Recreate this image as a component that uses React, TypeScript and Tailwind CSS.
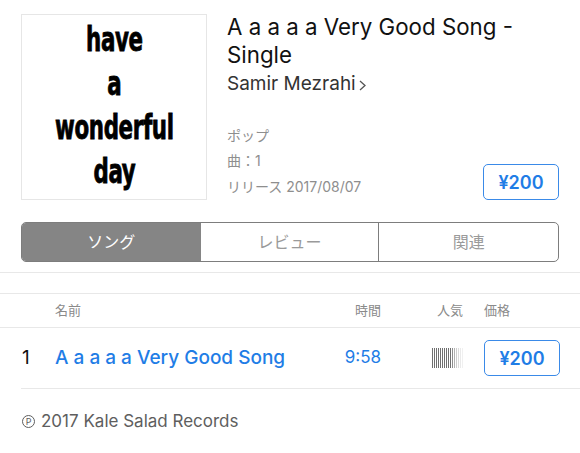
const sans = "font-['Inter','Noto_Sans_CJK_JP',sans-serif]";

const PriceButton = () => (
  <button className="w-[76px] h-[36px] rounded-[5px] border border-[#3a8ae8] text-[#1f7de6] text-[18px] font-semibold flex items-center justify-center">
    ¥200
  </button>
);

const PopularityBars = () => {
  const bars = [1, 1, 1, 1, 1, 1, 1, 1, 1, 1, 0.8, 0.55, 0.35, 0.25, 0.15, 0.1];
  return (
    <div className="flex gap-[1px] h-[20px] justify-end">
      {bars.map((o, i) => (
        <div key={i} className="w-[1px] h-full bg-[#6f6f6f]" style={{ opacity: o }} />
      ))}
    </div>
  );
};

export default function App() {
  return (
    <div className={`w-[580px] h-[453px] bg-white overflow-hidden ${sans}`}>
      {/* header */}
      <div className="flex px-[21px] pt-[14px]">
        <div className="w-[186px] h-[186px] shrink-0 border border-[#e6e6e6] flex items-center justify-center">
          <div className="flex flex-col items-center scale-x-[0.72] -translate-y-[1px] font-['DejaVu_Sans_Condensed','DejaVu_Sans',sans-serif] font-bold text-[33px] leading-[44px] text-black tracking-[-0.5px] [-webkit-text-stroke:0.8px_black]">
            <span>have</span>
            <span>a</span>
            <span>wonderful</span>
            <span>day</span>
          </div>
        </div>
        <div className="ml-[20px] flex-1 flex flex-col">
          <h1 className="text-[22.3px] leading-[28px] text-[#111] -mt-[1px]">A a a a a Very Good Song - Single</h1>
          <div className="flex items-center text-[19px] leading-[28px] text-[#333] mt-[1px]">
            Samir Mezrahi
            <svg width="9" height="13" viewBox="0 0 9 13" className="ml-[2px] mt-[3px]">
              <path d="M2 2l5 4.5L2 11" fill="none" stroke="#555" strokeWidth="1.3" />
            </svg>
          </div>
          <div className="flex-1 flex items-end justify-between">
            <div className="text-[14px] leading-[25.5px] text-[#8e8e8e] mb-[1px]">
              <div>ポップ</div>
              <div>曲：1</div>
              <div>リリース 2017/08/07</div>
            </div>
            <PriceButton />
          </div>
        </div>
      </div>

      {/* segmented control */}
      <div className="mx-[21px] mt-[22px] h-[40px] grid grid-cols-3 border border-[#7d7d7d] rounded-[5px] overflow-hidden text-[16px]">
        <div className="bg-[#858585] text-white flex items-center justify-center">ソング</div>
        <div className="text-[#9a9a9a] flex items-center justify-center border-r border-[#7d7d7d]">レビュー</div>
        <div className="text-[#9a9a9a] flex items-center justify-center">関連</div>
      </div>

      <div className="mt-[10px] border-t border-[#e8e8e8] h-[21px]" />

      {/* table header */}
      <div className="border-t border-[#e8e8e8] h-[34px] flex items-center px-[21px] text-[13px] text-[#8a8a8a]">
        <div className="w-[34px]" />
        <div className="flex-1">名前</div>
        <div className="w-[60px] text-right">時間</div>
        <div className="w-[82px] text-right">人気</div>
        <div className="w-[21px]" />
        <div className="w-[75px]">価格</div>
      </div>

      {/* row */}
      <div className="border-t border-[#e8e8e8]">
        <div className="h-[61px] flex items-center ml-[21px] pr-[20px] border-b border-[#e8e8e8]">
          <div className="w-[34px] pl-[1px] text-[19px] text-[#111] mt-[1px]">1</div>
          <div className="flex-1 text-[19px] font-medium text-[#1f7de6] mt-[1px]">A a a a a Very Good Song</div>
          <div className="w-[60px] text-right text-[17px] text-[#1f7de6]">9:58</div>
          <div className="w-[82px]"><PopularityBars /></div>
          <div className="w-[21px]" />
          <PriceButton />
        </div>
      </div>

      {/* footer */}
      <div className="pl-[22px] pt-[20px] text-[17px] text-[#5e5e5e] flex items-center">
        <span className="w-[13px] h-[13px] rounded-full border border-[#5e5e5e] flex items-center justify-center text-[9px] leading-none mr-[6px]">P</span>
        2017 Kale Salad Records
      </div>
    </div>
  );
}
